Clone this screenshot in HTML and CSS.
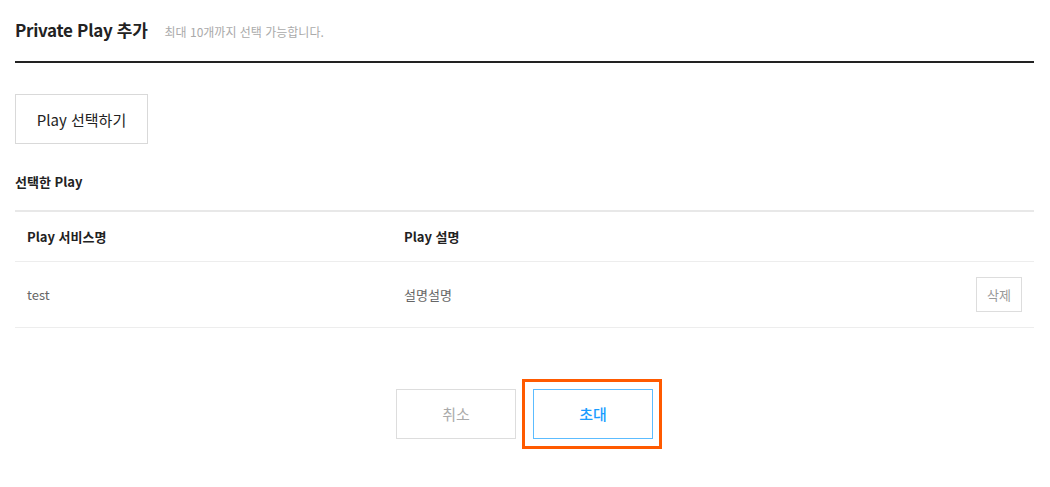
FILE: index.html
```html
<!DOCTYPE html>
<html lang="ko">
<head>
<meta charset="utf-8">
<title>Private Play 추가</title>
<link rel="stylesheet" href="styles.css">
</head>
<body>
<div class="page">
  <header class="head">
    <h1 class="title">Private Play 추가</h1>
    <span class="sub">최대 10개까지 선택 가능합니다.</span>
  </header>
  <div class="pick">
    <button class="btn-pick" type="button">Play 선택하기</button>
  </div>
  <h2 class="section">선택한 Play</h2>
  <table class="list">
    <thead>
      <tr><th class="c1">Play 서비스명</th><th class="c2">Play 설명</th><th class="c3"></th></tr>
    </thead>
    <tbody>
      <tr><td class="c1">test</td><td class="c2">설명설명</td><td class="c3"><button class="btn-del" type="button">삭제</button></td></tr>
    </tbody>
  </table>
  <div class="actions">
    <button class="btn btn-cancel" type="button">취소</button>
    <button class="btn btn-invite" type="button">초대</button>
  </div>
</div>
</body>
</html>
```
FILE: styles.css
```css
* { box-sizing: border-box; }
html, body { margin: 0; padding: 0; background: #fff; }
body {
  font-family: "Noto Sans CJK KR", "Noto Sans", sans-serif;
  color: #222;
}
.page { padding: 0 16px 40px 15px; }
.head {
  display: flex;
  align-items: baseline;
  gap: 17px;
  padding-top: 17px;
  height: 63px;
  border-bottom: 2px solid #222;
}
.title {
  margin: 0;
  font-size: 17px;
  font-weight: 700;
  letter-spacing: -0.3px;
  line-height: 26px;
  color: #222;
}
.sub { font-size: 12px; color: #aaa; }
.pick { padding-top: 31px; }
.btn-pick {
  width: 133px;
  height: 50px;
  border: 1px solid #d9d9d9;
  background: #fff;
  font-family: inherit;
  font-size: 15px;
  color: #222;
  padding: 0;
}
.section {
  margin: 28px 0 0;
  font-size: 13px;
  font-weight: 700;
  line-height: 20px;
}
.list {
  margin-top: 18px;
  width: 100%;
  border-collapse: collapse;
  border-top: 2px solid #e8e8e8;
}
.list th, .list td {
  text-align: left;
  padding: 0 12px;
  font-size: 13px;
  border-bottom: 1px solid #ededed;
}
.list th { height: 50px; font-weight: 700; color: #222; }
.list td { height: 66px; color: #666; }
.list .c1 { width: 377px; }
.list .c3 { text-align: right; }
.btn-del {
  width: 46px;
  height: 35px;
  border: 1px solid #ddd;
  background: #fff;
  font-family: inherit;
  font-size: 13px;
  color: #999;
  padding: 0;
}
.actions {
  display: flex;
  justify-content: center;
  gap: 17px;
  margin-top: 61px;
}
.btn {
  width: 120px;
  height: 50px;
  background: #fff;
  font-family: inherit;
  font-size: 15px;
  padding: 0;
}
.btn-cancel { border: 1px solid #ddd; color: #aaa; }
.btn-invite {
  position: relative;
  border: 1px solid #5cbcff;
  color: #1a9cff;
  font-weight: 500;
}
.btn-invite::after {
  content: "";
  position: absolute;
  left: -12px;
  right: -10px;
  top: -11px;
  bottom: -11px;
  border: 3px solid #ff5a00;
  pointer-events: none;
}
```
